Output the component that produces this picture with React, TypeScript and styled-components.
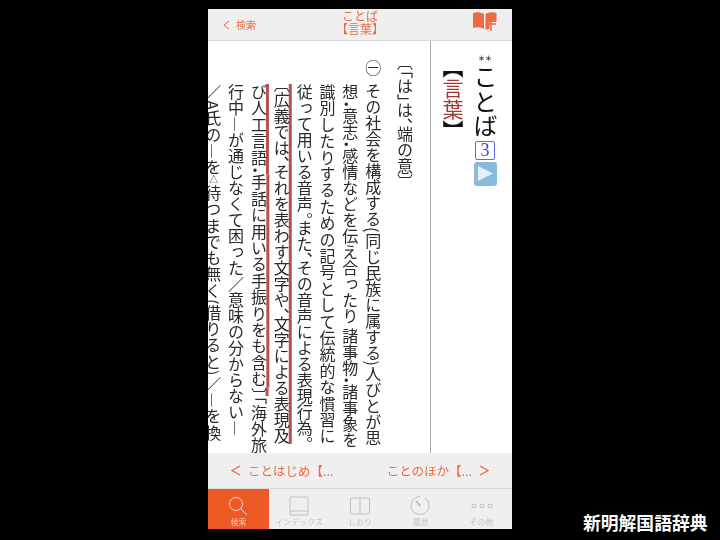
import React from "react";
import styled, { createGlobalStyle } from "styled-components";

const Global = createGlobalStyle`
  html, body { margin: 0; padding: 0; background: #000; }
  body { font-family: "Noto Sans CJK JP", "Liberation Sans", sans-serif; }
`;
const Stage = styled.div`
  position: relative;
  width: 720px;
  height: 540px;
  padding-top: 9px;
  box-sizing: border-box;
  overflow: hidden;
  background: #000;
`;
const Phone = styled.div`
  width: 304px;
  height: 520px;
  margin-left: 208px;
  background: #fff;
  display: flex;
  flex-direction: column;
  filter: blur(0.35px);
`;
const Header = styled.header`
  height: 32px;
  flex: none;
  background: #efefef;
  border-bottom: 1px solid #d8d8d8;
  box-sizing: border-box;
  display: grid;
  grid-template-columns: 1fr auto 1fr;
  align-items: center;
  padding: 0 15px;
  color: #ee6a45;
`;
const Back = styled.div`
  display: flex;
  align-items: center;
  gap: 6px;
  font-size: 10px;
`;
const HeadTitle = styled.div`
  font-size: 12px;
  line-height: 13px;
  text-align: center;
  margin-top: -5px;
`;
const HeadIcon = styled.div`
  display: flex;
  justify-content: flex-end;
  margin-top: -3px;
`;
const Half = styled.span`
  font-feature-settings: "halt", "vhal";
`;
const Body = styled.main`
  flex: 1;
  min-height: 0;
  display: flex;
  background: #fff;
`;
const Entry = styled.section`
  flex: 1;
  min-width: 0;
  overflow: hidden;
  writing-mode: vertical-rl;
  padding-right: 14px;
  font-size: 16px;
  color: #2a2a2a;
`;
const Line = styled.div<{ $start: number; $track?: number }>`
  width: 22.85px;
  line-height: 22.85px;
  height: 412px;
  box-sizing: border-box;
  padding-top: ${(p) => p.$start}px;
  letter-spacing: ${(p) => p.$track ?? 0}px;
  white-space: nowrap;
`;
const Note = styled(Line)`
  margin-left: 9px;
`;
const Marker = styled.span`
  margin-inline-end: 7px;
`;
const Marked = styled.span`
  text-decoration: underline 3px #b8504f;
  text-underline-position: right;
  text-underline-offset: -2px;
  text-decoration-skip-ink: none;
`;
const Small = styled.span`
  font-size: 9px;
`;
const HeadPane = styled.aside`
  flex: none;
  width: 82px;
  box-sizing: border-box;
  border-left: 1px solid #aaa;
  padding: 13px 14px 0 0;
  display: flex;
  justify-content: flex-end;
  align-items: flex-start;
  gap: 8px;
`;
const WordCol = styled.div`
  display: flex;
  flex-direction: column;
  align-items: center;
  width: 26px;
`;
const Stars = styled.div`
  font-size: 7px;
  line-height: 8px;
  font-weight: 700;
  color: #333;
  white-space: nowrap;
`;
const Word = styled.div`
  writing-mode: vertical-rl;
  font-size: 24px;
  line-height: 26px;
  letter-spacing: 0.5px;
  color: #111;
  margin-top: 3px;
`;
const Level = styled.div`
  width: 20px;
  height: 19px;
  margin-top: 2px;
  box-sizing: border-box;
  border: 1.5px solid #5a66e6;
  border-radius: 2px;
  color: #3a44dd;
  font: 18px/16px "Liberation Serif", serif;
  text-align: center;
`;
const Play = styled.div`
  width: 23px;
  height: 24px;
  margin-top: 2px;
  border-radius: 3px;
  background: #86bbdc;
  display: flex;
  align-items: center;
  justify-content: center;
`;
const Kanji = styled.div`
  writing-mode: vertical-rl;
  font-size: 21px;
  line-height: 22px;
  color: #a23b36;
  padding-top: 13px;
`;
const Bracket = styled(Half)`
  color: #111;
`;
const Pager = styled.nav`
  height: 36px;
  flex: none;
  background: #efefef;
  border-bottom: 1px solid #dcdcdc;
  box-sizing: border-box;
  display: flex;
  justify-content: space-between;
  align-items: center;
  padding: 0 23px;
  font-size: 12.5px;
  color: #ee6a45;
`;
const PagerItem = styled.span`
  display: flex;
  align-items: center;
  gap: 7px;
`;
const Tabs = styled.nav`
  height: 40px;
  flex: none;
  background: #efefef;
  display: grid;
  grid-template-columns: repeat(5, 1fr);
`;
const Tab = styled.div<{ $on?: boolean }>`
  display: flex;
  flex-direction: column;
  align-items: center;
  justify-content: flex-start;
  padding-top: 5px;
  box-sizing: border-box;
  background: ${(p) => (p.$on ? "#ee5a26" : "transparent")};
  color: ${(p) => (p.$on ? "#f6c3ad" : "#c4c4c4")};
  font-size: 8px;
  line-height: 10px;
  overflow: hidden;
`;
const IconSlot = styled.div`
  height: 23px;
  display: flex;
  align-items: center;
  justify-content: center;
`;
const Caption = styled.div`
  position: absolute;
  left: 583px;
  top: 511px;
  color: #fff;
  font-size: 17.8px;
  line-height: 22px;
  font-weight: 700;
  white-space: nowrap;
`;

const fit = (text: string) =>
  text.split(/([、。（）()〔〕「」【】・])/).map((part, i) =>
    i % 2 ? <Half key={i}>{part}</Half> : part
  );

const Chevron = ({ left }: { left?: boolean }) => (
  <svg width="10" height="11" viewBox="0 0 10 11" fill="none" stroke="#ee6a45" strokeWidth="1.400">
    <path d={left ? "M9 1 1 5.500 9 10" : "M1 1l8 4.500L1 10"} />
  </svg>
);

export default function App() {
  return (
    <Stage>
      <Global />
      <Phone>
        <Header>
          <Back>
            <svg width="7" height="10" viewBox="0 0 7 10" fill="none" stroke="#ee6a45" strokeWidth="1">
              <path d="M6 1 1 5l5 4" />
            </svg>
            検索
          </Back>
          <HeadTitle>
            ことば
            <br />
            {fit("【言葉】")}
          </HeadTitle>
          <HeadIcon>
            <svg width="24" height="22" viewBox="0 0 24 22">
              <path fill="#ee6a45" d="M0 1c3-1 8-1 11 1v15c-3-2-8-2-11-1zM12.500 2c3-2 8-2 11-1v9h-7v7c-1 0-3 0-4 1z" />
              <path stroke="#ee6a45" strokeWidth="1.500" fill="none" d="M18 8v11M13 12h10" />
            </svg>
          </HeadIcon>
        </Header>
        <Body>
          <Entry>
            <Note $start={21}>{fit("〔「は」は、端の意〕")}</Note>
            <Line $start={19}>
              <Marker>㊀</Marker>
              {fit("その社会を構成する(同じ民族に属する)人びとが思")}
            </Line>
            <Line $start={43}>{fit("想・意志・感情などを伝え合ったり 諸事物・諸事象を")}</Line>
            <Line $start={43} $track={0.4}>{fit("識別したりするための記号として伝統的な慣習に")}</Line>
            <Line $start={43}>{fit("従って用いる音声。また、その音声による表現行為。")}</Line>
            <Line $start={43}>
              <Marked>{fit("〔広義では、それを表わす文字や、文字による表現及")}</Marked>
            </Line>
            <Line $start={43} $track={0.4}>
              <Marked>{fit("び人工言語・手話に用いる手振りをも含む〕")}</Marked>
              {fit("「海外旅")}
            </Line>
            <Line $start={43}>{fit("行中―が通じなくて困った／意味の分からない―")}</Line>
            <Line $start={43} $track={0.3}>
              ／A氏の―を<Small>△</Small>
              {fit("待つまでも無く(借りると)／―を換")}
            </Line>
          </Entry>
          <HeadPane>
            <Kanji>
              <Bracket>【</Bracket>言葉<Bracket>】</Bracket>
            </Kanji>
            <WordCol>
              <Stars>＊＊</Stars>
              <Word>ことば</Word>
              <Level>3</Level>
              <Play>
                <svg width="17" height="17" viewBox="0 0 16 16">
                  <path fill="#e4f1f8" d="M1 1l14 7-14 7z" />
                </svg>
              </Play>
            </WordCol>
          </HeadPane>
        </Body>
        <Pager>
          <PagerItem>
            <Chevron left />
            <span>ことはじめ【...</span>
          </PagerItem>
          <PagerItem>
            <span>ことのほか【...</span>
            <Chevron />
          </PagerItem>
        </Pager>
        <Tabs>
          <Tab $on>
            <IconSlot>
              <svg width="20" height="20" viewBox="0 0 20 20" fill="none" stroke="#fbd9c9" strokeWidth="1">
                <circle cx="8" cy="8" r="6.500" />
                <path d="M12.500 12.500 19 19" />
              </svg>
            </IconSlot>
            検索
          </Tab>
          <Tab>
            <IconSlot>
              <svg width="20" height="20" viewBox="0 0 20 20" fill="none" stroke="#b4b4b4" strokeWidth="0.8">
                <rect x="1" y="1" width="18" height="18" rx="1" />
                <path d="M1 15h18" />
              </svg>
            </IconSlot>
            インデックス
          </Tab>
          <Tab>
            <IconSlot>
              <svg width="20" height="18" viewBox="0 0 20 18" fill="none" stroke="#b4b4b4" strokeWidth="0.8">
                <rect x="0.500" y="1" width="19" height="16" rx="1" />
                <path d="M10 1v16" />
              </svg>
            </IconSlot>
            しおり
          </Tab>
          <Tab>
            <IconSlot>
              <svg width="21" height="21" viewBox="0 0 21 21" fill="none" stroke="#b4b4b4" strokeWidth="0.9">
                <path d="M10 1.500a9 9 0 1 0 5 1.500" />
                <path d="M6 6l4.500 5" strokeWidth="1.400" />
              </svg>
            </IconSlot>
            履歴
          </Tab>
          <Tab>
            <IconSlot>
              <svg width="22" height="6" viewBox="0 0 22 6" fill="none" stroke="#b4b4b4" strokeWidth="0.9">
                <circle cx="3" cy="3" r="2" />
                <circle cx="11" cy="3" r="2" />
                <circle cx="19" cy="3" r="2" />
              </svg>
            </IconSlot>
            その他
          </Tab>
        </Tabs>
      </Phone>
      <Caption>新明解国語辞典</Caption>
    </Stage>
  );
}
